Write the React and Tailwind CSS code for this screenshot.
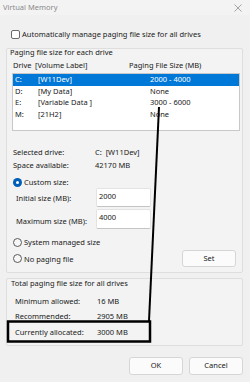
import React from 'react';

const font = { fontFamily: '"Noto Sans", "Open Sans", sans-serif' };

function Radio({ checked }) {
  return checked ? (
    <span className="w-[9px] h-[9px] rounded-full bg-[#005fb8] flex items-center justify-center shrink-0">
      <span className="w-[3px] h-[3px] rounded-full bg-white" />
    </span>
  ) : (
    <span className="w-[9px] h-[9px] rounded-full border border-[#5a5a5a] bg-[#f7f7f7] shrink-0" />
  );
}

const drives = [
  { letter: 'C:', label: '[W11Dev]', size: '2000 - 4000', selected: true },
  { letter: 'D:', label: '[My Data]', size: 'None' },
  { letter: 'E:', label: '[Variable Data ]', size: '3000 - 6000' },
  { letter: 'M:', label: '[21H2]', size: 'None' },
];

export default function App() {
  return (
    <div
      className="relative w-[250px] h-[382px] overflow-hidden bg-[#f0f0f0] text-[#202020] text-[7.5px] flex flex-col"
      style={font}
    >
      {/* Title bar */}
      <div className="h-[15px] flex items-center justify-between pl-[3px] pr-[8px] bg-[#f3f3f3]">
        <span className="text-[#8a8a8a] leading-none">Virtual Memory</span>
        <svg width="8" height="8" viewBox="0 0 8 8" className="text-[#9a9a9a]">
          <path d="M0.5 0.5 L7.5 7.5 M7.5 0.5 L0.5 7.5" stroke="currentColor" strokeWidth="0.9" />
        </svg>
      </div>

      {/* Auto manage */}
      <div className="mt-[15px] h-[9px] flex items-center pl-[11px] gap-[2px]">
        <span className="w-[9px] h-[9px] rounded-[2px] border border-[#6b6b6b] bg-white shrink-0" />
        <span className="leading-[9px]">Automatically manage paging file size for all drives</span>
      </div>

      {/* Group 1 */}
      <div className="mt-[9px] ml-[6px] w-[237px] h-[225px] border border-[#dedede] bg-[#f3f3f3] rounded-[2px] flex flex-col">
        <div className="h-[7px] leading-[7px] pl-[3px]">Paging file size for each drive</div>
        <div className="mt-[5px] h-[9px] leading-[9px] flex">
          <span className="pl-[6px] w-[28px]">Drive</span>
          <span className="w-[94px]">[Volume Label]</span>
          <span>Paging File Size (MB)</span>
        </div>
        <div className="mt-[3px] ml-[5px] w-[228px] h-[58px] border border-[#c8c8c8] bg-white">
          {drives.map((d) => (
            <div
              key={d.letter}
              className={`h-[11.5px] leading-[11.5px] flex ${d.selected ? 'bg-[#0078d7] text-white' : ''}`}
            >
              <span className="pl-[2px] w-[25px]">{d.letter}</span>
              <span className="w-[112px]">{d.label}</span>
              <span>{d.size}</span>
            </div>
          ))}
        </div>

        <div className="mt-[16px] h-[10px] leading-[10px] flex pl-[6px]">
          <span className="w-[82px]">Selected drive:</span>
          <span>C:&nbsp;&nbsp;[W11Dev]</span>
        </div>
        <div className="mt-[3px] h-[10px] leading-[10px] flex pl-[6px]">
          <span className="w-[82px]">Space available:</span>
          <span>42170 MB</span>
        </div>

        <div className="mt-[7px] h-[10px] flex items-center pl-[6px] gap-[2px]">
          <Radio checked />
          <span className="leading-[10px]">Custom size:</span>
        </div>
        <div className="mt-[1px] h-[19px] flex items-center pl-[9px]">
          <span className="w-[80px] pt-[2px]">Initial size (MB):</span>
          <div className="w-[55px] h-[19px] bg-white border border-[#e3e3e3] border-b-[#c4c4c4] rounded-[2px] pl-[2px] pt-[2px] leading-[10px]">
            2000
          </div>
        </div>
        <div className="mt-[2px] h-[20px] flex items-center pl-[9px]">
          <span className="w-[80px] pt-[5px]">Maximum size (MB):</span>
          <div className="w-[55px] h-[20px] bg-white border border-[#e3e3e3] border-b-[#c4c4c4] rounded-[2px] pl-[2px] pt-[2px] leading-[10px]">
            4000
          </div>
        </div>

        <div className="mt-[8px] h-[10px] flex items-center pl-[6px] gap-[2px]">
          <Radio />
          <span className="leading-[10px]">System managed size</span>
        </div>
        <div className="mt-[3px] h-[17px] flex items-center pl-[6px] gap-[2px]">
          <Radio />
          <span className="leading-[10px] flex-1">No paging file</span>
          <button className="mr-[6px] w-[54px] h-[17px] bg-[#fbfbfb] border border-[#d6d6d6] rounded-[3px] leading-none">
            Set
          </button>
        </div>
      </div>

      {/* Group 2 */}
      <div className="mt-[5px] ml-[6px] w-[237px] h-[68px] border border-[#dedede] bg-[#f3f3f3] rounded-[2px] flex flex-col">
        <div className="h-[8px] leading-[8px] pl-[4px]">Total paging file size for all drives</div>
        <div className="mt-[9px] h-[10px] leading-[10px] flex pl-[8px]">
          <span className="w-[82px]">Minimum allowed:</span>
          <span>16 MB</span>
        </div>
        <div className="mt-[5px] h-[10px] leading-[10px] flex pl-[8px]">
          <span className="w-[82px]">Recommended:</span>
          <span>2905 MB</span>
        </div>
        <div className="mt-[6px] h-[10px] leading-[10px] flex pl-[8px]">
          <span className="w-[82px]">Currently allocated:</span>
          <span>3000 MB</span>
        </div>
      </div>

      {/* Buttons */}
      <div className="mt-[11px] flex justify-end gap-[6px] pr-[7px]">
        <button className="w-[54px] h-[18px] bg-[#fbfbfb] border border-[#d6d6d6] rounded-[3px] leading-none">OK</button>
        <button className="w-[54px] h-[18px] bg-[#fbfbfb] border border-[#d6d6d6] rounded-[3px] leading-none">Cancel</button>
      </div>

      {/* Annotation overlay */}
      <svg className="absolute inset-0 pointer-events-none" width="250" height="382" viewBox="0 0 250 382">
        <line x1="159" y1="107" x2="149" y2="321" stroke="#000" strokeWidth="2" />
        <rect x="8" y="321.5" width="142" height="20" fill="none" stroke="#000" strokeWidth="2.5" />
      </svg>
    </div>
  );
}
